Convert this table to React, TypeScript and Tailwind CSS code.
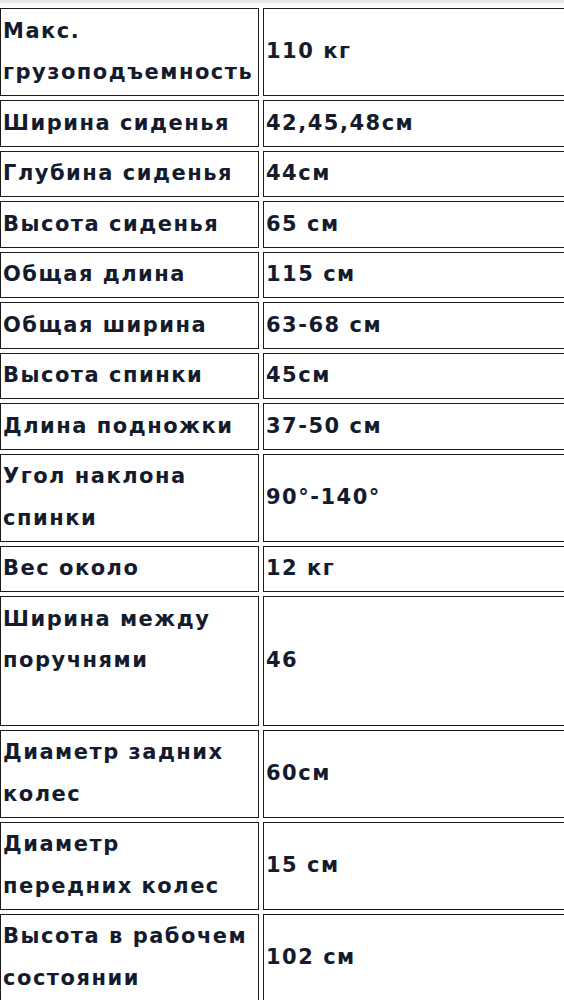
const ROWS: { label: string[]; value: string }[] = [
  { label: ["Макс.", "грузоподъемность"], value: "110 кг" },
  { label: ["Ширина сиденья"], value: "42,45,48см" },
  { label: ["Глубина сиденья"], value: "44см" },
  { label: ["Высота сиденья"], value: "65 см" },
  { label: ["Общая длина"], value: "115 см" },
  { label: ["Общая ширина"], value: "63-68 см" },
  { label: ["Высота спинки"], value: "45см" },
  { label: ["Длина подножки"], value: "37-50 см" },
  { label: ["Угол наклона", "спинки"], value: "90°-140°" },
  { label: ["Вес около"], value: "12 кг" },
  { label: ["Ширина между", "поручнями", ""], value: "46" },
  { label: ["Диаметр задних", "колес"], value: "60см" },
  { label: ["Диаметр", "передних колес"], value: "15 см" },
  { label: ["Высота в рабочем", "состоянии"], value: "102 см" },
];

const cell = "border-[1.5px] border-[#1c1c1c] flex flex-col justify-center py-[1.5px]";

export default function App() {
  return (
    <div className="w-full h-[1000px] overflow-hidden bg-white font-['DejaVu_Sans','Noto_Sans',sans-serif] text-[#141b2d] font-bold text-[21px] leading-[41.5px] tracking-[1.5px]">
      <div className="h-[3px] bg-[#e9e9ea]" />
      <div className="h-[5px] bg-gradient-to-b from-[#f6f6f6] to-white" />
      <div className="w-[600px] flex flex-col gap-[4px]">
        {ROWS.map((row) => (
          <div key={row.value} className="grid grid-cols-[259px_1fr] gap-x-[4px]">
            <div className={`${cell} pl-[2px]`}>
              {row.label.map((line, i) => (
                <div key={i} className="whitespace-nowrap">
                  {line || "\u00a0"}
                </div>
              ))}
            </div>
            <div className={`${cell} pl-[2px]`}>
              <div className="whitespace-nowrap">{row.value}</div>
            </div>
          </div>
        ))}
      </div>
    </div>
  );
}
